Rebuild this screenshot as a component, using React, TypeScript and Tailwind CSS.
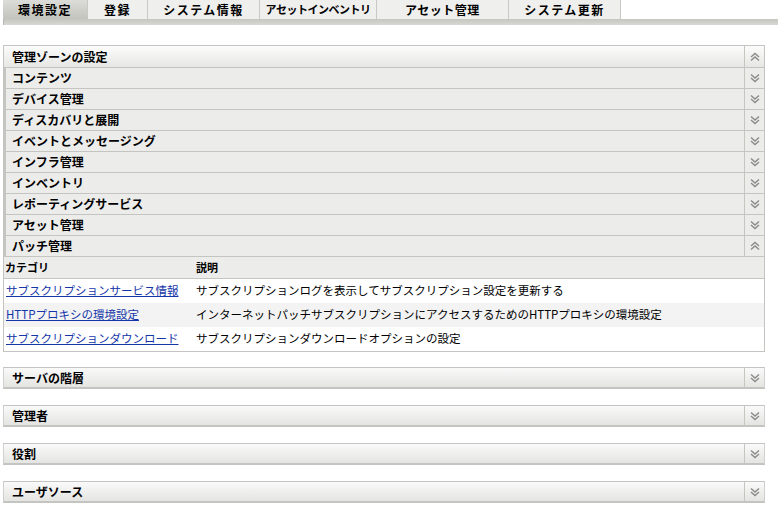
import React from 'react';

const font = { fontFamily: '"Noto Sans CJK JP", "Liberation Sans", sans-serif' };

const tabs = [
  { label: '環境設定', w: 'w-[85px]', t: 'tracking-[1.5px] text-[12px]' },
  { label: '登録', w: 'w-[60px]', t: 'tracking-[1.5px] text-[12px]' },
  { label: 'システム情報', w: 'w-[112px]', t: 'tracking-[1.5px] text-[12px]' },
  { label: 'アセットインベントリ', w: 'w-[117px]', t: 'tracking-[-0.5px] text-[11px]' },
  { label: 'アセット管理', w: 'w-[132px]', t: 'tracking-[0.5px] text-[12px]' },
  { label: 'システム更新', w: 'w-[112px]', t: 'tracking-[1.5px] text-[12px]' },
];

const sections = [
  'コンテンツ',
  'デバイス管理',
  'ディスカバリと展開',
  'イベントとメッセージング',
  'インフラ管理',
  'インベントリ',
  'レポーティングサービス',
  'アセット管理',
];

const rows = [
  {
    name: 'サブスクリプションサービス情報',
    desc: 'サブスクリプションログを表示してサブスクリプション設定を更新する',
  },
  {
    name: 'HTTPプロキシの環境設定',
    desc: 'インターネットパッチサブスクリプションにアクセスするためのHTTPプロキシの環境設定',
  },
  {
    name: 'サブスクリプションダウンロード',
    desc: 'サブスクリプションダウンロードオプションの設定',
  },
];

const others = ['サーバの階層', '管理者', '役割', 'ユーザソース'];

function Chevron({ up }: { up?: boolean }) {
  return (
    <svg width="10" height="10" viewBox="0 0 10 10" className={up ? 'rotate-180' : ''}>
      <path d="M1 1.5 L5 5 L9 1.5" fill="none" stroke="#8a8a8a" strokeWidth="1.4" />
      <path d="M1 5 L5 8.5 L9 5" fill="none" stroke="#8a8a8a" strokeWidth="1.4" />
    </svg>
  );
}

function ArrowCell({ up }: { up?: boolean }) {
  return (
    <div className="w-[20px] shrink-0 flex items-center justify-center border-l border-[#c6c6c0]">
      <Chevron up={up} />
    </div>
  );
}

function SubRow({ label, up }: { label: string; up?: boolean }) {
  return (
    <div className="flex h-[21px] bg-[#ececea] border-b border-[#c4c4c0]">
      <div className="flex-1 flex items-center pl-[6px] text-[12px] font-bold text-black">{label}</div>
      <ArrowCell up={up} />
    </div>
  );
}

function Panel({ label }: { label: string }) {
  return (
    <div className="flex h-[22px] border-t border-[#c4c4c4] border-x border-x-[#d0d0d0] border-b-2 border-b-[#c4c4c0] bg-gradient-to-b from-[#fafafa] to-[#e4e4e2]">
      <div className="flex-1 flex items-center pl-[8px] text-[12px] font-bold text-black">{label}</div>
      <ArrowCell />
    </div>
  );
}

export default function App() {
  return (
    <div className="w-[778px] h-[518px] bg-white overflow-hidden" style={font}>
      {/* tab bar */}
      <div className="flex h-[19px] pl-[3px]">
        {tabs.map((t, i) => (
          <div
            key={t.label}
            className={`${t.w} ${t.t} whitespace-nowrap flex items-center justify-center font-bold text-black border-r border-[#c8c8c4] ${
              i === 0 ? 'bg-gradient-to-b from-[#dcdcd8] to-[#c4c4be]' : 'bg-[#efefed]'
            }`}
          >
            {t.label}
          </div>
        ))}
      </div>
      <div className="h-[6px] bg-gradient-to-b from-[#c6c6c0] to-[#d8d8d4] ml-[3px] border-l border-[#b8b8b2]" />

      <div className="mt-[20px] mx-[3px] w-[762px]">
        {/* main panel */}
        <div className="border border-[#c4c4c0]">
          <div className="flex h-[22px] border-b border-[#c4c4c0] bg-gradient-to-b from-[#fcfcfc] to-[#e6e6e4]">
            <div className="flex-1 flex items-center pl-[8px] text-[12px] font-bold text-black">管理ゾーンの設定</div>
            <ArrowCell up />
          </div>
          <div className="border-l-2 border-[#c4c4c0]">
            {sections.map((s) => (
              <SubRow key={s} label={s} />
            ))}
            <SubRow label="パッチ管理" up />
          </div>
          <div className="flex h-[22px] items-center bg-[#ececea] border-b border-[#c4c4c0] text-[11px] font-bold text-black">
            <div className="w-[192px] pl-[1px]">カテゴリ</div>
            <div>説明</div>
          </div>
          {rows.map((r, i) => (
            <div
              key={r.name}
              className={`flex h-[24px] items-center text-[11.5px] ${i === 1 ? 'bg-[#f3f3f3]' : 'bg-white'}`}
            >
              <div className="w-[192px] pl-[2px] whitespace-nowrap">
                <a href="#" className="text-[#1436a8] underline">
                  {r.name}
                </a>
              </div>
              <div className="text-black whitespace-nowrap">{r.desc}</div>
            </div>
          ))}
        </div>

        <div className="flex flex-col gap-[16px] mt-[15px]">
          {others.map((o) => (
            <Panel key={o} label={o} />
          ))}
        </div>
      </div>
    </div>
  );
}
